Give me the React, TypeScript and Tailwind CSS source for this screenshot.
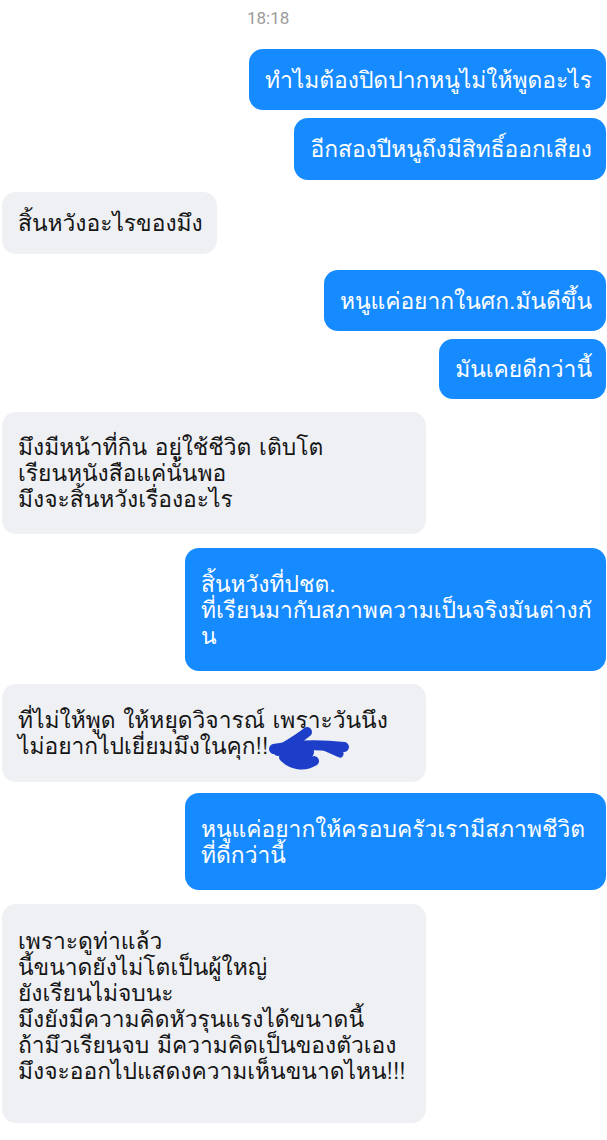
type Msg = {
  me: boolean;
  lines: string[];
  h: string;
  mt: string;
  w?: string;
  pb?: string;
  scribble?: boolean;
};

const msgs: Msg[] = [
  { me: true, lines: ["ทำไมต้องปิดปากหนูไม่ให้พูดอะไร"], h: "h-[61px]", mt: "mt-[20px]" },
  { me: true, lines: ["อีกสองปีหนูถึงมีสิทธิ์ออกเสียง"], h: "h-[62px]", mt: "mt-[8px]" },
  { me: false, lines: ["สิ้นหวังอะไรของมึง"], h: "h-[62px]", mt: "mt-[12px]" },
  { me: true, lines: ["หนูแค่อยากในศก.มันดีขึ้น"], h: "h-[61px]", mt: "mt-[16px]" },
  { me: true, lines: ["มันเคยดีกว่านี้"], h: "h-[60px]", mt: "mt-[8px]" },
  {
    me: false,
    lines: ["มึงมีหน้าที่กิน อยู่ใช้ชีวิต เติบโต", "เรียนหนังสือแค่นั้นพอ", "มึงจะสิ้นหวังเรื่องอะไร"],
    h: "h-[122px]",
    mt: "mt-[13px]",
    w: "w-[424px]",
  },
  {
    me: true,
    lines: ["สิ้นหวังที่ปชต.", "ที่เรียนมากับสภาพความเป็นจริงมันต่างกั", "น"],
    h: "h-[123px]",
    mt: "mt-[14px]",
    w: "w-[421px]",
  },
  {
    me: false,
    lines: ["ที่ไม่ให้พูด ให้หยุดวิจารณ์ เพราะวันนึง", "ไม่อยากไปเยี่ยมมึงในคุก!! ."],
    h: "h-[98px]",
    mt: "mt-[13px]",
    w: "w-[424px]",
    scribble: true,
  },
  {
    me: true,
    lines: ["หนูแค่อยากให้ครอบครัวเรามีสภาพชีวิต", "ที่ดีกว่านี้"],
    h: "h-[97px]",
    mt: "mt-[11px]",
    w: "w-[421px]",
  },
  {
    me: false,
    lines: [
      "เพราะดูท่าแล้ว",
      "นี้ขนาดยังไม่โตเป็นผู้ใหญ่",
      "ยังเรียนไม่จบนะ",
      "มึงยังมีความคิดหัวรุนแรงได้ขนาดนี้",
      "ถ้ามึวเรียนจบ มีความคิดเป็นของตัวเอง",
      "มึงจะออกไปแสดงความเห็นขนาดไหน!!!",
    ],
    h: "h-[219px]",
    mt: "mt-[14px]",
    w: "w-[424px]",
    pb: "pb-[16px]",
  },
];

// blue marker scribble hiding a word
function Scribble() {
  return (
    <svg className="absolute left-[262px] top-[40px]" width="90" height="50" viewBox="0 0 90 50">
      <g stroke="#1c3ec8" fill="#1c3ec8" strokeLinecap="round" strokeLinejoin="round">
        <path d="M10 25 C 30 21, 55 20, 80 23" strokeWidth="10" fill="none" />
        <path d="M43 8 C 36 14, 26 20, 14 27" strokeWidth="10" fill="none" />
        <path d="M20 33 C 28 41, 40 43, 50 37" strokeWidth="10" fill="none" />
        <ellipse cx="34" cy="28" rx="16" ry="10" stroke="none" />
        <path d="M58 22 L 76 30" strokeWidth="7" fill="none" />
      </g>
    </svg>
  );
}

export default function App() {
  return (
    <main
      className="w-[607px] min-h-[1140px] bg-white pb-[20px] flex flex-col"
      style={{ fontFamily: 'Loma, "Noto Sans Thai", "Noto Sans", sans-serif' }}
    >
      <div className="pt-[7px] pl-[247px] text-[17px] leading-[22px] text-[#9b9b9b] font-['Roboto',sans-serif]">
        18:18
      </div>
      {msgs.map((m, i) => (
        <div key={i} className={`flex ${m.me ? "justify-end pr-[1px]" : "justify-start pl-[2px]"} ${m.mt}`}>
          <div
            className={`relative ${m.h} ${m.w ?? ""} ${m.pb ?? ""} flex flex-col justify-center rounded-[14px] pl-[16px] pr-[14px] text-[22.8px] leading-[26px] whitespace-nowrap ${
              m.me ? "bg-[#168aff] text-white" : "bg-[#eff0f4] text-[#161616]"
            }`}
          >
            {m.lines.map((l, j) => (
              <div key={j}>{l}</div>
            ))}
            {m.scribble && <Scribble />}
          </div>
        </div>
      ))}
    </main>
  );
}
